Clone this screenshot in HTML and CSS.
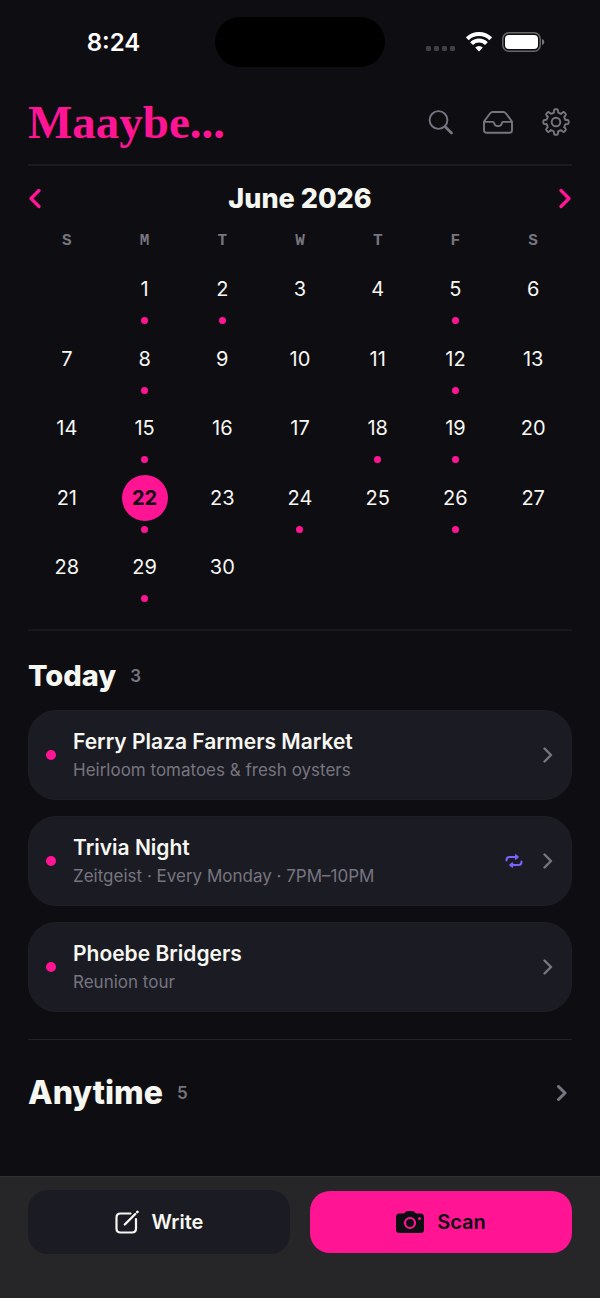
FILE: index.html
```html
<!DOCTYPE html>
<html lang="en">
<head>
	<meta charset="utf-8">
	<meta name="viewport" content="width=device-width, initial-scale=1">
	<title>Maaybe...</title>
	<link rel="stylesheet" href="styles.css">
</head>
<body>
	<div class="status-bar">
		<div class="time">8:24</div>
		<div class="island"></div>
		<div class="status-icons">
			<svg width="30" height="20" viewBox="0 0 30 20" fill="#424245">
				<rect x="0" y="14" width="5" height="5" rx="1.5"/>
				<rect x="8" y="14" width="5" height="5" rx="1.5"/>
				<rect x="16" y="14" width="5" height="5" rx="1.5"/>
				<rect x="24" y="14" width="5" height="5" rx="1.5"/>
			</svg>
			<svg width="26" height="20" viewBox="0 0 26 20" fill="none" stroke="#fff" stroke-width="4">
				<path d="M1.3 6.8a16.8 16.8 0 0 1 23.4 0"/>
				<path d="M5.6 11.6a10.6 10.6 0 0 1 14.8 0"/>
				<path d="M13 19.4l-3.8-3.9a5.4 5.4 0 0 1 7.6 0z" fill="#fff" stroke="none"/>
			</svg>
			<svg width="43" height="20" viewBox="0 0 43 20">
				<rect x="0.8" y="0.8" width="37.4" height="18.4" rx="6" fill="none" stroke="#68686b" stroke-width="1.5"/>
				<rect x="3" y="3" width="33" height="14" rx="4" fill="#fff"/>
				<path d="M40 7c3 1 3 5 0 6z" fill="#77777a"/>
			</svg>
		</div>
	</div>

	<main class="content">
		<header class="header">
			<h1 class="logo">Maaybe...</h1>
			<div class="header-actions">
				<button class="icon-btn" aria-label="Search">
					<svg width="26" height="28" viewBox="0 0 26 28" fill="none" stroke="#77757f" stroke-linecap="round">
						<circle cx="10.5" cy="12" r="8.9" stroke-width="1.9"/>
						<path d="M17.200 18.700L23.500 25" stroke-width="2.8"/>
					</svg>
				</button>
				<button class="icon-btn" aria-label="Inbox">
					<svg width="30" height="28" viewBox="0 0 30 28" fill="none" stroke="#77757f" stroke-width="1.9" stroke-linejoin="round">
						<path d="M1 13.500L7.200 5.200Q8.100 4 9.600 4H20.400Q21.900 4 22.800 5.200L29 13.500V22.200Q29 24.800 26.400 24.800H3.600Q1 24.800 1 22.200Z"/>
						<path d="M1 13.900H9.800Q10.900 13.900 11.100 15.100A4 4 0 0 0 18.900 15.100Q19.100 13.900 20.200 13.900H29"/>
					</svg>
				</button>
				<button class="icon-btn" aria-label="Settings">
					<svg width="28" height="28" viewBox="0 0 28 28" fill="none" stroke="#77757f" stroke-width="1.9" stroke-linecap="round" stroke-linejoin="round">
						<defs>
							<path id="tooth" d="M11.800 4.500L12 2.500Q12.200 1.300 13.200 1.300H14.800Q15.800 1.300 16 2.500L16.200 4.500Q17.700 5.600 19.200 5.700"/>
						</defs>
						<use href="#tooth"/>
						<use href="#tooth" transform="rotate(45 14 14)"/>
						<use href="#tooth" transform="rotate(90 14 14)"/>
						<use href="#tooth" transform="rotate(135 14 14)"/>
						<use href="#tooth" transform="rotate(180 14 14)"/>
						<use href="#tooth" transform="rotate(225 14 14)"/>
						<use href="#tooth" transform="rotate(270 14 14)"/>
						<use href="#tooth" transform="rotate(315 14 14)"/>
						<circle cx="14" cy="14" r="4.3"/>
					</svg>
				</button>
			</div>
		</header>

		<section class="calendar">
			<div class="month-bar">
				<button class="icon-btn" aria-label="Previous month">
					<svg width="14" height="22" viewBox="0 0 14 22" fill="none" stroke="#ff1493" stroke-width="3.4" stroke-linecap="round" stroke-linejoin="round"><path d="M11 2.500L3 10.500L11 18.500"/></svg>
				</button>
				<h2 class="month">June 2026</h2>
				<button class="icon-btn" aria-label="Next month">
					<svg width="14" height="22" viewBox="0 0 14 22" fill="none" stroke="#ff1493" stroke-width="3.4" stroke-linecap="round" stroke-linejoin="round"><path d="M3 2.500L11 10.500L3 18.500"/></svg>
				</button>
			</div>
			<div class="weekdays">
				<span>S</span><span>M</span><span>T</span><span>W</span><span>T</span><span>F</span><span>S</span>
			</div>
			<div class="days">
				<button class="day first has-event">1</button>
				<button class="day has-event">2</button>
				<button class="day">3</button>
				<button class="day">4</button>
				<button class="day has-event">5</button>
				<button class="day">6</button>
				<button class="day">7</button>
				<button class="day has-event">8</button>
				<button class="day">9</button>
				<button class="day">10</button>
				<button class="day">11</button>
				<button class="day has-event">12</button>
				<button class="day">13</button>
				<button class="day">14</button>
				<button class="day has-event">15</button>
				<button class="day">16</button>
				<button class="day">17</button>
				<button class="day has-event">18</button>
				<button class="day has-event">19</button>
				<button class="day">20</button>
				<button class="day">21</button>
				<button class="day has-event today"><span>22</span></button>
				<button class="day">23</button>
				<button class="day has-event">24</button>
				<button class="day">25</button>
				<button class="day has-event">26</button>
				<button class="day">27</button>
				<button class="day">28</button>
				<button class="day has-event">29</button>
				<button class="day">30</button>
			</div>
		</section>

		<section class="today-list">
			<div class="section-head">
				<h2 class="section-title">Today</h2>
				<span class="count">3</span>
			</div>
			<a class="card" href="#">
				<span class="dot"></span>
				<span class="card-text">
					<span class="card-title">Ferry Plaza Farmers Market</span>
					<span class="card-sub">Heirloom tomatoes &amp; fresh oysters</span>
				</span>
				<svg class="chevron" width="10" height="16" viewBox="0 0 10 16"><path d="M1.500 1.500L8 8L1.500 14.500"/></svg>
			</a>
			<a class="card" href="#">
				<span class="dot"></span>
				<span class="card-text">
					<span class="card-title">Trivia Night</span>
					<span class="card-sub">Zeitgeist · Every Monday · 7PM–10PM</span>
				</span>
				<svg class="repeat" width="18" height="16" viewBox="0 0 18 16" fill="none" stroke="#7b61ff" stroke-width="2" stroke-linecap="round">
					<path d="M1.500 7.500V7Q1.500 4 4.500 4H10.500M16.500 8.500V9Q16.500 12 13.500 12H7.500"/>
					<path d="M10.500 1.800L13.300 4L10.500 6.200ZM7.500 9.800L4.700 12L7.500 14.200Z" fill="#7b61ff" stroke-width="1.2" stroke-linejoin="round"/>
				</svg>
				<svg class="chevron" width="10" height="16" viewBox="0 0 10 16"><path d="M1.500 1.500L8 8L1.500 14.500"/></svg>
			</a>
			<a class="card" href="#">
				<span class="dot"></span>
				<span class="card-text">
					<span class="card-title">Phoebe Bridgers</span>
					<span class="card-sub">Reunion tour</span>
				</span>
				<svg class="chevron" width="10" height="16" viewBox="0 0 10 16"><path d="M1.500 1.500L8 8L1.500 14.500"/></svg>
			</a>
		</section>

		<a class="anytime" href="#">
			<h2 class="anytime-title">Anytime</h2>
			<span class="count">5</span>
			<svg class="chevron bold" width="10" height="16" viewBox="0 0 10 16"><path d="M1.500 1.500L8 8L1.500 14.500"/></svg>
		</a>
	</main>

	<footer class="bottom-bar">
		<button class="action write">
			<svg width="24" height="26" viewBox="0 0 24 26" fill="none" stroke="#f7f7f2" stroke-width="2.2" stroke-linecap="round">
				<path d="M15.500 4.500H5.500Q1.500 4.500 1.500 8.500V19.500Q1.500 23.500 5.500 23.500H17Q21 23.500 21 19.500V10"/>
				<path d="M9.800 15.500L20.300 5" stroke-width="2.400"/>
				<path d="M22.300 3L22.500 2.800" stroke-width="2.600"/>
			</svg>
			Write
		</button>
		<button class="action scan">
			<svg width="28" height="26" viewBox="0 0 28 26">
				<path d="M3.500 4.500H7.500Q8.500 4.500 9 3.500Q10 2 11.500 2H16.500Q18 2 19 3.500Q19.500 4.500 20.500 4.500H24.500Q28 4.500 28 8V20.500Q28 24 24.500 24H3.500Q0 24 0 20.500V8Q0 4.500 3.500 4.500Z" fill="#0e0d12"/>
				<circle cx="14" cy="14" r="5" fill="none" stroke="#ff1493" stroke-width="2.200"/>
				<circle cx="23.500" cy="9.500" r="1.500" fill="#ff1493"/>
			</svg>
			Scan
		</button>
	</footer>
</body>
</html>
```
FILE: styles.css
```css
* {
	box-sizing: border-box;
}

body {
	margin: 0;
	min-height: 100vh;
	display: flex;
	flex-direction: column;
	background: #0e0d12;
	color: #f7f7f2;
	font-family: Inter, "Liberation Sans", sans-serif;
}

h1, h2 {
	margin: 0;
}

button {
	border: none;
	background: none;
	color: inherit;
	font-family: inherit;
	padding: 0;
	cursor: pointer;
}

a {
	color: inherit;
	text-decoration: none;
}

svg {
	display: block;
	flex-shrink: 0;
}

/* status bar */
.status-bar {
	display: grid;
	grid-template-columns: 1fr 170px 1fr;
	align-items: center;
	padding-top: 17px;
	height: 67px;
}

.time {
	text-align: center;
	padding-left: 12px;
	font-size: 24px;
	font-weight: 600;
	color: #fff;
}

.island {
	height: 50px;
	border-radius: 25px;
	background: #000;
}

.status-icons {
	display: flex;
	justify-content: center;
	gap: 10px;
	padding-right: 14px;
}

.content {
	padding: 0 28px;
}

/* header */
.header {
	display: flex;
	justify-content: space-between;
	align-items: center;
	height: 99px;
	padding-top: 12px;
	border-bottom: 2px solid #1b1b21;
}

.logo {
	font-family: "Liberation Serif", serif;
	font-size: 47px;
	line-height: 56px;
	color: #ff1493;
}

.header-actions {
	display: flex;
	align-items: center;
	gap: 29px;
	padding-right: 2px;
}

/* calendar */
.calendar {
	padding: 14px 0 15px;
	border-bottom: 2px solid #18181e;
}

.month-bar {
	display: flex;
	justify-content: space-between;
	align-items: center;
}

.month {
	font-size: 27px;
	line-height: 38px;
	font-weight: 800;
}

.weekdays {
	display: grid;
	grid-template-columns: repeat(7, 1fr);
	margin-top: 13px;
	text-align: center;
	font-family: "Liberation Mono", monospace;
	font-size: 16px;
	line-height: 20px;
	font-weight: 700;
	color: #77757f;
}

.days {
	display: grid;
	grid-template-columns: repeat(7, 1fr);
	grid-template-rows: repeat(5, 1fr);
	height: 348px;
	margin-top: 15px;
}

.day {
	display: flex;
	flex-direction: column;
	align-items: center;
	justify-content: flex-start;
	font-size: 20px;
	line-height: 46px;
}

.day.first {
	grid-column: 2;
}

.has-event::after {
	content: "";
	width: 7px;
	height: 7px;
	margin-top: 5px;
	border-radius: 50%;
	background: #ff1493;
}

.today span {
	width: 46px;
	border-radius: 50%;
	background: #ff1493;
	color: #0e0d12;
	font-weight: 700;
}

/* event lists */
.today-list {
	padding: 24px 0 27px;
	border-bottom: 1px solid #222228;
}

.section-head {
	display: flex;
	align-items: center;
	gap: 14px;
	margin-bottom: 14px;
}

.section-title {
	font-size: 29px;
	line-height: 41px;
	font-weight: 800;
}

.count {
	font-size: 17px;
	font-weight: 600;
	color: #77757f;
}

.card {
	display: flex;
	align-items: center;
	gap: 17px;
	padding: 16px 18px 16px 17px;
	border: 1px solid #1e1e24;
	border-radius: 28px;
	background: #1b1b23;
}

.card + .card {
	margin-top: 16px;
}

.dot {
	width: 10px;
	height: 10px;
	border-radius: 50%;
	background: #ff1493;
}

.card-text {
	flex: 1;
	display: flex;
	flex-direction: column;
}

.card-title {
	font-size: 21px;
	line-height: 30px;
	font-weight: 600;
}

.card-sub {
	font-size: 17px;
	line-height: 26px;
	color: #77757f;
}

.repeat {
	margin-right: 3px;
}

.chevron {
	fill: none;
	stroke: #77757f;
	stroke-width: 2.4;
	stroke-linecap: round;
	stroke-linejoin: round;
}

.chevron.bold {
	stroke-width: 3;
	margin-left: auto;
}

.anytime {
	display: flex;
	align-items: center;
	gap: 14px;
	padding: 30px 5px 30px 0;
}

.anytime-title {
	font-size: 32px;
	line-height: 46px;
	font-weight: 800;
}

/* bottom actions */
.bottom-bar {
	position: sticky;
	bottom: 0;
	display: flex;
	align-items: center;
	gap: 20px;
	margin-top: auto;
	padding: 13px 28px 44px;
	border-top: 1px solid #303032;
	background: #262628;
}

.action {
	flex: 1;
	display: flex;
	justify-content: center;
	align-items: center;
	gap: 13px;
	height: 64px;
	border-radius: 20px;
	font-size: 20px;
	font-weight: 600;
}

.write {
	background: #1b1b23;
}

.scan {
	height: 62px;
	background: #ff1493;
	color: #0e0d12;
}
```
